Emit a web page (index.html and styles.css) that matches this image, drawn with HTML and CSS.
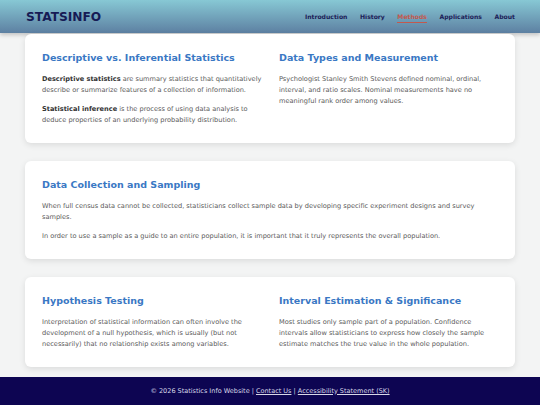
FILE: index.html
```html
<!DOCTYPE html>
<html lang="en">
<head>
<meta charset="utf-8">
<title>StatsInfo - Methods</title>
<link rel="stylesheet" href="styles.css">
</head>
<body>
<header class="site-header">
  <div class="logo">STATSINFO</div>
  <nav class="nav">
    <a href="#">Introduction</a>
    <a href="#">History</a>
    <a href="#" class="active">Methods</a>
    <a href="#">Applications</a>
    <a href="#">About</a>
  </nav>
</header>
<main class="main">
  <section class="card two-col">
    <div class="col">
      <h2>Descriptive vs. Inferential Statistics</h2>
      <p><strong>Descriptive statistics</strong> are summary statistics that quantitatively describe or summarize features of a collection of information.</p>
      <p><strong>Statistical inference</strong> is the process of using data analysis to deduce properties of an underlying probability distribution.</p>
    </div>
    <div class="col">
      <h2>Data Types and Measurement</h2>
      <p>Psychologist Stanley Smith Stevens defined nominal, ordinal, interval, and ratio scales. Nominal measurements have no meaningful rank order among values.</p>
    </div>
  </section>
  <section class="card">
    <h2>Data Collection and Sampling</h2>
    <p>When full census data cannot be collected, statisticians collect sample data by developing specific experiment designs and survey samples.</p>
    <p>In order to use a sample as a guide to an entire population, it is important that it truly represents the overall population.</p>
  </section>
  <section class="card two-col">
    <div class="col">
      <h2>Hypothesis Testing</h2>
      <p>Interpretation of statistical information can often involve the development of a null hypothesis, which is usually (but not necessarily) that no relationship exists among variables.</p>
    </div>
    <div class="col">
      <h2>Interval Estimation &amp; Significance</h2>
      <p>Most studies only sample part of a population. Confidence intervals allow statisticians to express how closely the sample estimate matches the true value in the whole population.</p>
    </div>
  </section>
</main>
<footer class="site-footer">
  <p class="footer-text">&copy; 2026 Statistics Info Website | <a href="#">Contact Us</a> | <a href="#">Accessibility Statement (SK)</a></p>
</footer>
</body>
</html>
```
FILE: styles.css
```css
* { box-sizing: border-box; }
html, body { margin: 0; padding: 0; }
body {
  font-family: "DejaVu Sans", "Liberation Sans", sans-serif;
  background: #f3f4f4;
  color: #555;
}
.site-header {
  height: 33px;
  display: flex;
  align-items: center;
  justify-content: space-between;
  padding: 0 25px 0 26px;
  background: linear-gradient(to bottom, #87c8d4, #5d80a2);
  box-shadow: 0 2px 4px rgba(0,0,0,0.2);
}
.logo {
  font-weight: bold;
  font-size: 12.2px;
  color: #161b55;
}
.nav { display: flex; gap: 12.5px; }
.nav a {
  font-size: 6.1px;
  font-weight: bold;
  color: #1b2057;
  text-decoration: none;
  padding: 3px 0 2px;
  border-bottom: 1px solid transparent;
}
.nav a.active {
  color: #c2594e;
  border-bottom-color: #c2594e;
}
.main {
  padding: 1px 25px 10px;
  display: flex;
  flex-direction: column;
  gap: 18px;
}
.card {
  background: #fff;
  border-radius: 6px;
  box-shadow: 0 2px 6px rgba(0,0,0,0.1);
  padding: 18px 17px 17px;
}
.two-col {
  display: grid;
  grid-template-columns: 225px 219px;
  column-gap: 12px;
}
h2 {
  margin: 0 0 10px;
  font-size: 9.5px;
  font-weight: bold;
  color: #3a78c4;
  line-height: 12px;
}
p {
  margin: 0 0 8px;
  font-size: 6.6px;
  line-height: 11px;
  color: #5a5a5a;
}
p:last-child { margin-bottom: 0; }
strong { color: #333; }
.site-footer {
  height: 28px;
  background: #0d0552;
  display: flex;
  align-items: center;
  justify-content: center;
}
.footer-text {
  margin: 0;
  color: #d8d8e8;
  font-size: 6.5px;
  line-height: 11px;
}
.footer-text a { color: #d8d8e8; }
```
